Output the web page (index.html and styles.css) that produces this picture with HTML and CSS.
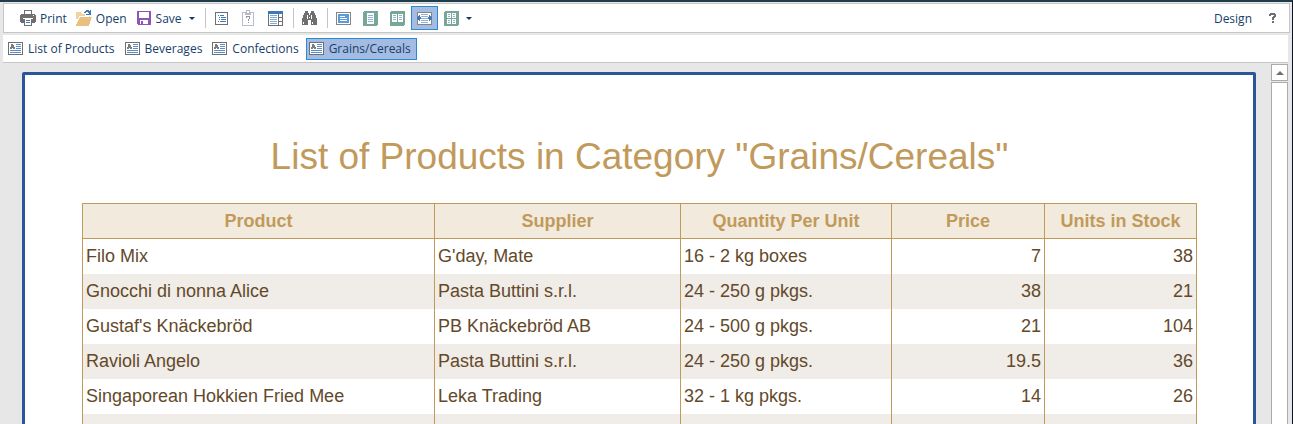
FILE: index.html
```html
<!DOCTYPE html>
<html lang="en">
<head>
	<meta charset="UTF-8">
	<title>Report Viewer</title>
	<link rel="stylesheet" href="styles.css">
</head>
<body>
	<!-- shared icon for the report tabs -->
	<svg class="defs" width="0" height="0">
		<symbol id="report" viewBox="0 0 15 13">
			<path d="M0 0h15v13H0z" fill="#6f6f6f"/>
			<path d="M1 1h13v11H1z" fill="#fff"/>
			<path d="M3 2h2v1h1v2h1v2H5V6H4v1H2V5h1z" fill="#7d7d7d"/>
			<path d="M8 2h5v1H8zM8 4h5v1H8zM8 6h5v1H8zM2 8h11v1H2zM2 10h11v1H2z" fill="#5b8dc4"/>
		</symbol>
	</svg>

	<div class="viewer">
		<div class="toolbar">
			<button class="btn print">
				<svg width="16" height="16" viewBox="0 0 16 16">
					<path d="M4 0h8v5H4zM1 4h14v1h1v7h-1v1H1v-1H0V5h1z" fill="#6f6f6f"/>
					<path d="M5 1h6v3H5z" fill="#fff"/>
					<path d="M3 8h10v1H3zM13 5h1v1h-1z" fill="#fff"/>
					<path d="M4 9h8v7H4z" fill="#6f6f6f"/>
					<path d="M5 9h6v6H5z" fill="#fff"/>
					<path d="M6 10h4v1H6zM6 12h4v1H6z" fill="#3e78b8"/>
				</svg>
				<span>Print</span>
			</button>
			<button class="btn open">
				<svg width="16" height="16" viewBox="0 0 16 16">
					<path d="M0 2h5l1 2h3v2h5v3H0z" fill="#f1d3a0"/>
					<path d="M0 3v12L4 7h12l-3 9H0z" fill="#e9c080"/>
					<path d="M0 14L4 6h9" fill="none" stroke="#fff"/>
					<path d="M8 3V2l2-2h3l1 2V0h1v5h-5V4h3l-1-2h-2L9 3z" fill="#3e78b8"/>
				</svg>
				<span>Open</span>
			</button>
			<button class="btn save">
				<svg width="14" height="14" viewBox="0 0 14 14">
					<path d="M0 0h14v14H1l-1-1z" fill="#8e55b3"/>
					<path d="M2 1h10v6H2zM3 9h8v4H3z" fill="#fff"/>
					<path d="M4 10h2v3H4z" fill="#8e55b3"/>
				</svg>
				<span>Save</span>
				<i class="arrow"></i>
			</button>
			<span class="sep"></span>
			<button class="btn icon" aria-label="Parameters">
				<svg width="13" height="13" viewBox="0 0 13 13">
					<path d="M0 0h13v13H0z" fill="#6f6f6f"/>
					<path d="M1 1h11v11H1z" fill="#fff"/>
					<path d="M3 3h1v1H3zM5 3h4v1H5zM4 5h1v1H4zM6 5h5v1H6zM4 7h1v1H4zM6 7h5v1H6zM3 9h1v1H3zM5 9h6v1H5z" fill="#3e78b8"/>
				</svg>
			</button>
			<button class="btn icon" aria-label="Help on report">
				<svg width="12" height="16" viewBox="0 0 12 16">
					<path d="M4 0h4v2h4v14H0V2h4z" fill="#b9bcc8"/>
					<path d="M5 1h2v2H5zM1 3h2v2h6V3h2v12H1z" fill="#fff"/>
					<path d="M4 6h4v1H4zM7 7h1v2H7zM6 9h1v2H6zM4 7h1v1H4zM6 12h1v1H6z" fill="#8c93ad"/>
				</svg>
			</button>
			<button class="btn icon" aria-label="Bookmarks">
				<svg width="15" height="15" viewBox="0 0 15 15">
					<path d="M0 0h15v15H0z" fill="#6f6f6f"/>
					<path d="M0 0h15v3H0z" fill="#3e78b8"/>
					<path d="M1 3h9v11H1zM11 3h3v3h-3zM11 7h3v3h-3zM11 11h3v3h-3z" fill="#fff"/>
					<path d="M2 4h7v1H2zM2 6h7v1H2zM2 8h7v1H2zM2 10h7v1H2zM2 12h7v1H2z" fill="#7fa9d6"/>
				</svg>
			</button>
			<span class="sep"></span>
			<button class="btn icon" aria-label="Find">
				<svg width="15" height="14" viewBox="0 0 15 14">
					<path d="M3 0h3v2h1v2h1V2h1V0h3v2h1v2h1v3h1v7H9V9H6v5H0V7h1V4h1V2h1z" fill="#6f6f6f"/>
					<path d="M7 6h1v1H7zM1 11h1v2H1zM10 11h1v2h-1zM5 4h1v4H5zM9 4h1v4H9z" fill="#fff"/>
				</svg>
			</button>
			<span class="sep"></span>
			<button class="btn icon" aria-label="Full screen">
				<svg width="15" height="13" viewBox="0 0 15 13">
					<path d="M0 0h15v13H0z" fill="#858585"/>
					<path d="M1 1h13v11H1z" fill="#fff"/>
					<path d="M2 2h11v9H2z" fill="#5b9bdb"/>
					<path d="M4 4h5v1H4zM4 6h7v1H4zM4 8h7v1H4z" fill="#fff"/>
				</svg>
			</button>
			<button class="btn icon" aria-label="One page">
				<svg width="15" height="15" viewBox="0 0 15 15">
					<rect width="15" height="15" rx="2" fill="#76a797"/>
					<path d="M4 2h7v11H4z" fill="#fff"/>
					<path d="M5 4h5v1H5zM5 6h5v1H5zM5 8h5v1H5zM5 10h5v1H5z" fill="#91b3d9"/>
				</svg>
			</button>
			<button class="btn icon" aria-label="Two pages">
				<svg width="15" height="15" viewBox="0 0 15 15">
					<rect width="15" height="15" rx="2" fill="#76a797"/>
					<path d="M2 3h5v8H2zM8 3h5v8H8z" fill="#fff"/>
					<path d="M3 4h3v1H3zM3 6h3v1H3zM3 8h3v1H3zM9 4h3v1H9zM9 6h3v1H9zM9 8h3v1H9z" fill="#91b3d9"/>
				</svg>
			</button>
			<button class="btn icon active" aria-label="Page width">
				<svg width="15" height="13" viewBox="0 0 15 13">
					<path d="M0 0h15v13H0z" fill="#858585"/>
					<path d="M1 1h13v11H1z" fill="#fff"/>
					<path d="M4 2h7v1H4zM4 4h7v1H4zM4 6h7v1H4zM4 8h7v1H4zM4 10h7v1H4z" fill="#91b3d9"/>
					<path d="M0 5h1V4h1V3h1v2h1v2H3v2H2V8H1V7H0zM15 5h-1V4h-1V3h-1v2h-1v2h1v2h1V8h1V7h1z" fill="#3e78b8"/>
				</svg>
			</button>
			<button class="btn icon drop" aria-label="Multiple pages">
				<svg width="15" height="15" viewBox="0 0 15 15">
					<rect width="15" height="15" rx="2" fill="#76a797"/>
					<path d="M3 2h4v5H3zM8 2h4v5H8zM3 8h4v5H3zM8 8h4v5H8z" fill="#fff"/>
					<path d="M4 3h2v1H4zM4 5h2v1H4zM9 3h2v1H9zM9 5h2v1H9zM4 9h2v1H4zM4 11h2v1H4zM9 9h2v1H9zM9 11h2v1H9z" fill="#91b3d9"/>
				</svg>
				<i class="arrow"></i>
			</button>
			<button class="btn design">Design</button>
			<button class="btn help" aria-label="Help">
				<svg width="7" height="10" viewBox="0 0 7 10">
					<path d="M1 0h5v1h1v3H6v1H5v2H3V4h1V3h1V2H2v1H0V1h1zM3 8h2v2H3z" fill="#6f6f6f"/>
				</svg>
			</button>
		</div>

		<div class="tabs">
			<button class="tab"><svg width="15" height="13"><use href="#report"/></svg>List of Products</button>
			<button class="tab"><svg width="15" height="13"><use href="#report"/></svg>Beverages</button>
			<button class="tab"><svg width="15" height="13"><use href="#report"/></svg>Confections</button>
			<button class="tab active"><svg width="15" height="13"><use href="#report"/></svg>Grains/Cereals</button>
		</div>

		<div class="content">
			<div class="page">
				<h1>List of Products in Category "Grains/Cereals"</h1>
				<table>
					<colgroup>
						<col>
						<col class="supplier">
						<col class="quantity">
						<col class="price">
						<col class="stock">
					</colgroup>
					<thead>
						<tr><th>Product</th><th>Supplier</th><th>Quantity Per Unit</th><th>Price</th><th>Units in Stock</th></tr>
					</thead>
					<tbody>
						<tr><td>Filo Mix</td><td>G'day, Mate</td><td>16 - 2 kg boxes</td><td class="num">7</td><td class="num">38</td></tr>
						<tr><td>Gnocchi di nonna Alice</td><td>Pasta Buttini s.r.l.</td><td>24 - 250 g pkgs.</td><td class="num">38</td><td class="num">21</td></tr>
						<tr><td>Gustaf's Knäckebröd</td><td>PB Knäckebröd AB</td><td>24 - 500 g pkgs.</td><td class="num">21</td><td class="num">104</td></tr>
						<tr><td>Ravioli Angelo</td><td>Pasta Buttini s.r.l.</td><td>24 - 250 g pkgs.</td><td class="num">19.5</td><td class="num">36</td></tr>
						<tr><td>Singaporean Hokkien Fried Mee</td><td>Leka Trading</td><td>32 - 1 kg pkgs.</td><td class="num">14</td><td class="num">26</td></tr>
						<tr><td></td><td></td><td></td><td></td><td></td></tr>
					</tbody>
				</table>
			</div>
			<div class="scrollbar">
				<button class="up" aria-label="Scroll up"></button>
				<div class="thumb"></div>
			</div>
		</div>
	</div>
</body>
</html>
```
FILE: styles.css
```css
*{box-sizing:border-box;}
body{margin:0;font-family:"Open Sans","Noto Sans",sans-serif;font-size:12px;color:#17406b;background-color:#e7e7e7;}
button{margin:0;padding:0;border:1px solid transparent;background:none;font:inherit;color:inherit;}
svg{display:block;flex:none;shape-rendering:crispEdges;}
.defs{position:absolute;}

.viewer{display:flex;flex-direction:column;height:100vh;padding:0 2px 0 3px;border-top:2px solid #1d3d4b;border-right:1px solid #0a1220;overflow:hidden;}

/* toolbar */
.toolbar{display:flex;flex:none;align-items:center;height:30px;margin-top:1px;border:1px solid #c6c6c6;background-color:#fff;}
.btn{display:flex;align-items:center;height:24px;}
.print{margin-left:15px;gap:4px;}
.open{margin-left:7px;gap:4px;}
.save{margin:0 5px 0 8px;gap:5px;}
.icon{justify-content:center;width:27px;}
.btn.active,.tab.active{border-color:#2b8ad6;background-color:#a5bce2;}
.arrow{margin-left:2px;border:3px solid transparent;border-top-color:#17375e;border-bottom:0;}
.drop{gap:5px;width:40px;}
.sep{width:1px;height:20px;margin:0 2px 0 4px;background-color:#c6c6c6;}
.design{margin-left:auto;}
.help{margin:0 12px 0 15px;}

/* report tabs */
.tabs{display:flex;flex:none;align-items:center;gap:1px;height:28px;margin:2px 2px 0 0;padding-left:2px;border-bottom:1px solid #c6c6c6;background-color:#fff;}
.tab{display:flex;align-items:center;gap:5px;height:22px;padding:0 5px 0 2px;}

/* report page */
.content{display:flex;flex:1;min-height:0;}
.page{flex:1;align-self:flex-start;margin:9px 15px 0 19px;padding:60px 56px 60px 57px;border:3px solid #2b579a;border-radius:2px;background-color:#fff;font-family:"Liberation Sans",Arial,sans-serif;}
h1{margin:0 0 24px;font-size:37px;line-height:44px;font-weight:normal;text-align:center;color:#c19a5b;}
table{width:100%;border-collapse:collapse;table-layout:fixed;font-size:18px;line-height:20px;color:#63492a;}
.supplier{width:246px;}
.quantity{width:211px;}
.price{width:153px;}
.stock{width:152px;}
th,td{height:35px;padding:0 3px;border:solid #c19a5b;border-width:0 1px;text-align:left;white-space:nowrap;}
th{border-width:1px;background-color:#f2eadd;color:#c19a5b;text-align:center;}
tbody tr:nth-child(even){background-color:#f0ece7;}
.num{text-align:right;}

/* scrollbar */
.scrollbar{display:flex;flex:none;flex-direction:column;gap:1px;width:17px;margin:1px 2px 0 0;}
.up{display:flex;align-items:center;justify-content:center;height:17px;border-color:#ababab;background-color:#fff;}
.up::before{content:"";border:4px solid transparent;border-bottom-color:#6f6f6f;border-top:0;}
.thumb{flex:1;border:1px solid #ababab;border-bottom:0;background-color:#fff;}
```
